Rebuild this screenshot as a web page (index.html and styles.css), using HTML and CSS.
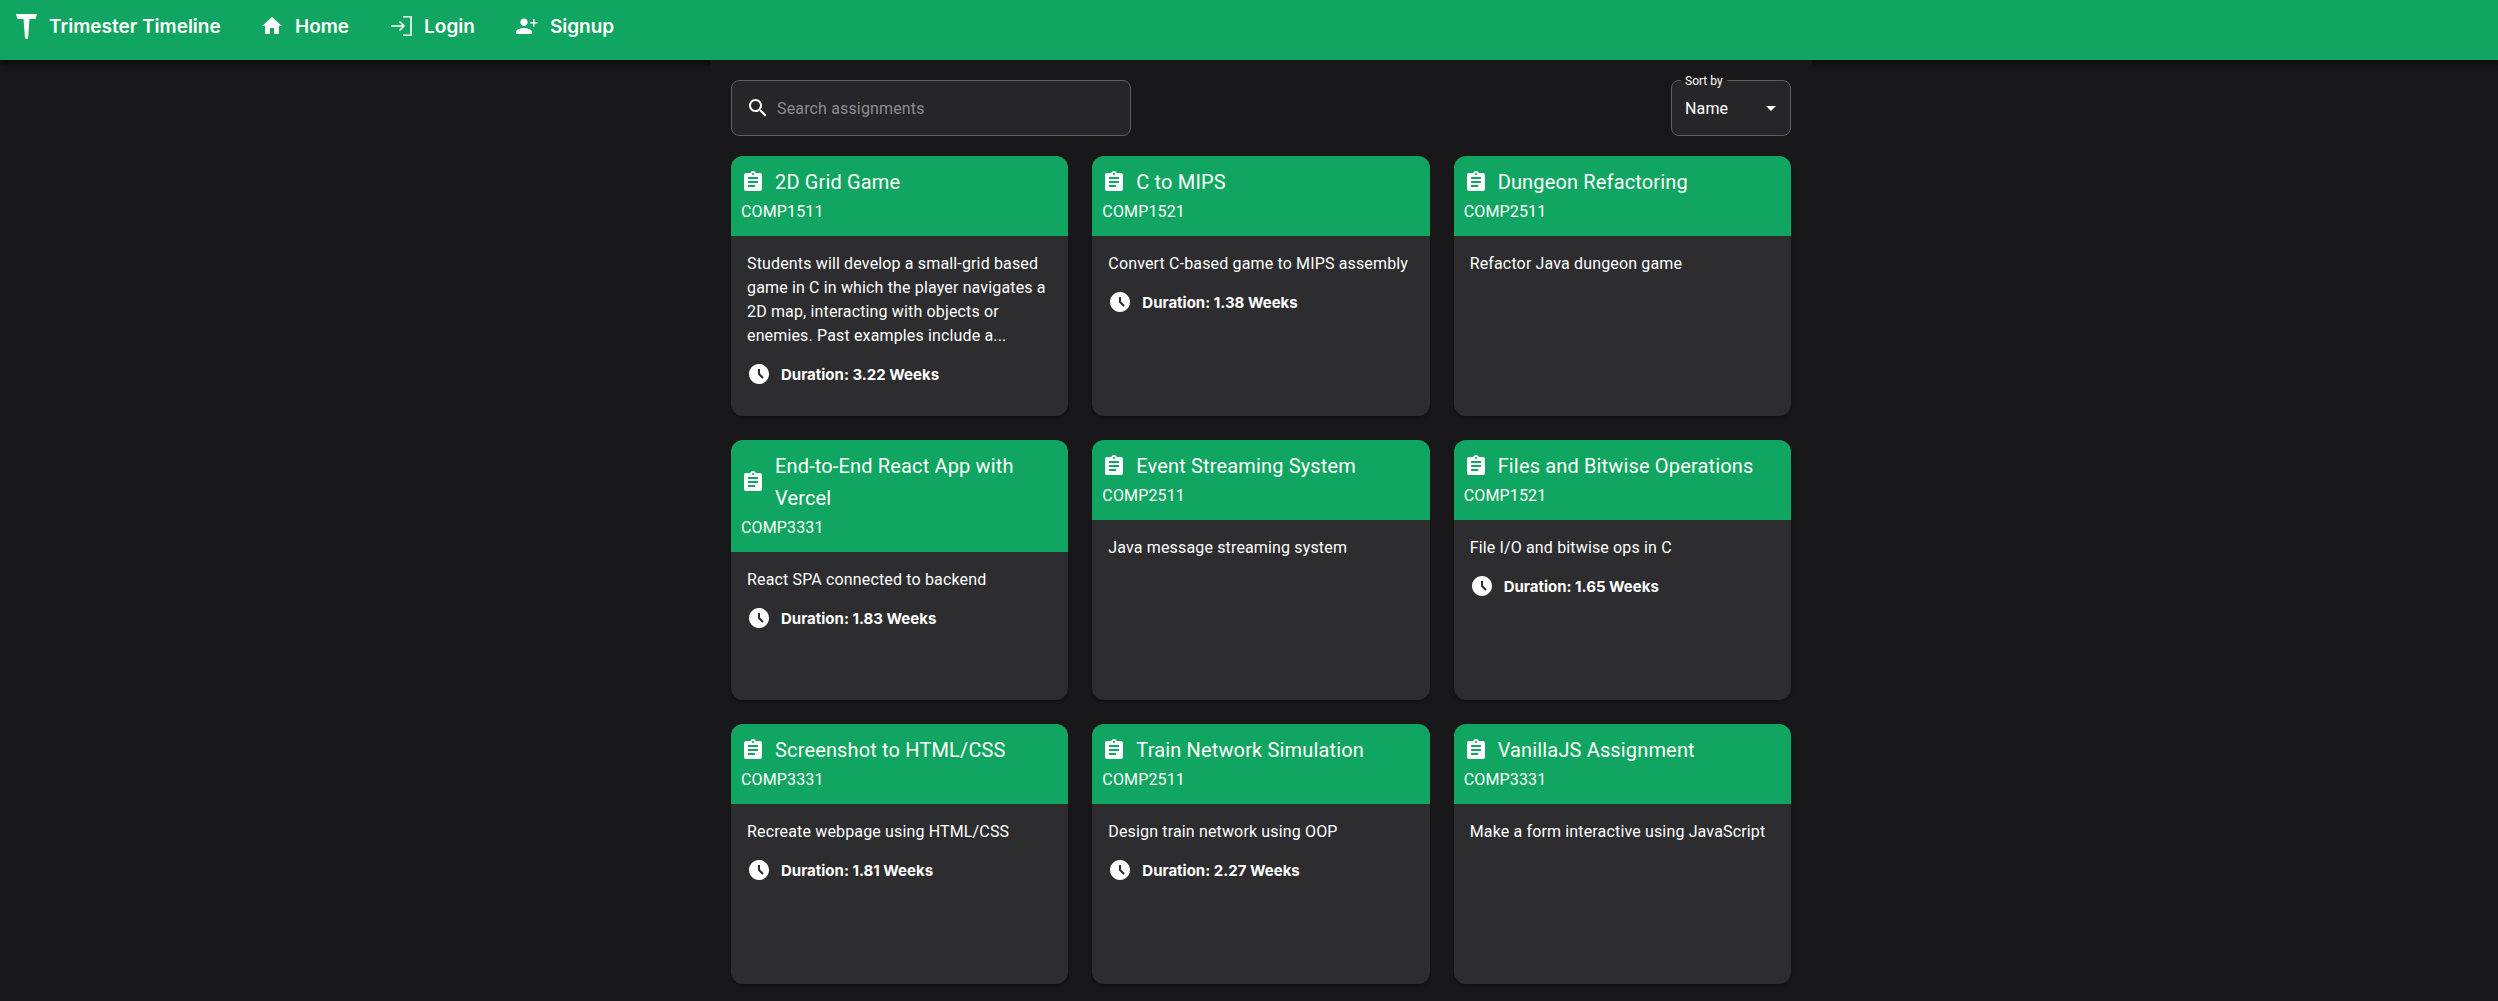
FILE: index.html
```html
<!DOCTYPE html>
<html lang="en">
<head>
<meta charset="utf-8">
<title>Trimester Timeline</title>
<link rel="stylesheet" href="styles.css">
</head>
<body>
<svg class="defs" width="0" height="0" aria-hidden="true">
  <symbol id="i-assign" viewBox="0 0 24 24"><path d="M19 3h-4.18C14.4 1.84 13.3 1 12 1c-1.3 0-2.4.84-2.82 2H5c-1.1 0-2 .9-2 2v14c0 1.1.9 2 2 2h14c1.1 0 2-.9 2-2V5c0-1.1-.9-2-2-2zm-7 0c.55 0 1 .45 1 1s-.45 1-1 1-1-.45-1-1 .45-1 1-1zm2 14H7v-2h7v2zm3-4H7v-2h10v2zm0-4H7V7h10v2z"/></symbol>
  <symbol id="i-clock" viewBox="0 0 24 24"><path d="M11.99 2C6.47 2 2 6.48 2 12s4.47 10 9.99 10C17.52 22 22 17.52 22 12S17.52 2 11.99 2zm3.3 14.71L11 12.41V7h2v4.59l3.71 3.71-1.42 1.41z"/></symbol>
</svg>
<header class="appbar">
  <div class="brand">
    <svg class="logo" viewBox="0 0 21 25"><path d="M0 0h21l-1.500 5h-6L12 25l-3-.500L7.500 5h-6z"/></svg>
    <span class="brand-name">Trimester Timeline</span>
  </div>
  <nav class="nav">
    <a class="nav-item"><svg class="ic" viewBox="0 0 24 24"><path d="M10 20v-6h4v6h5v-8h3L12 3 2 12h3v8z"/></svg><span>Home</span></a>
    <a class="nav-item"><svg class="ic stroke" viewBox="0 0 24 24"><path d="M2 12h13M10.500 7.500 15 12l-4.500 4.500M14 2.800h8v18.400h-8"/></svg><span>Login</span></a>
    <a class="nav-item"><svg class="ic" viewBox="0 0 24 24"><path d="M9 12c2 0 3.700-1.700 3.700-3.800S11 4.500 9 4.500 5.300 6.100 5.300 8.200 7 12 9 12zm0 2c-2.700 0-8 1.300-8 4v2h16v-2c0-2.700-5.300-4-8-4zM18 8V5h1.500v3h3v1.500h-3v3H18v-3h-3V8z"/></svg><span>Signup</span></a>
  </nav>
</header>
<div class="page">
  <main class="container">
    <div class="controls">
      <label class="search">
        <svg class="ic" viewBox="0 0 24 24"><path d="M15.500 14h-.79l-.28-.27C15.410 12.590 16 11.110 16 9.500 16 5.910 13.090 3 9.500 3S3 5.910 3 9.500 5.910 16 9.500 16c1.610 0 3.090-.59 4.230-1.570l.27.28v.79l5 4.990L20.490 19l-4.990-5zm-6 0C7.010 14 5 11.990 5 9.500S7.010 5 9.500 5 14 7.010 14 9.500 11.990 14 9.500 14z"/></svg>
        <span class="placeholder">Search assignments</span>
      </label>
      <div class="select">
        <span class="select-label">Sort by</span>
        <span class="select-value">Name</span>
        <svg class="ic" viewBox="0 0 24 24"><path d="M7 10l5 5 5-5z"/></svg>
      </div>
    </div>
    <section class="grid">
      <article class="card">
        <div class="card-head"><div class="card-title"><svg class="ic"><use href="#i-assign"/></svg><h2>2D Grid Game</h2></div><p class="code">COMP1511</p></div>
        <div class="card-body"><p class="desc">Students will develop a small-grid based game in C in which the player navigates a 2D map, interacting with objects or enemies. Past examples include a...</p><div class="duration"><svg class="ic"><use href="#i-clock"/></svg><span>Duration: 3.22 Weeks</span></div></div>
      </article>
      <article class="card">
        <div class="card-head"><div class="card-title"><svg class="ic"><use href="#i-assign"/></svg><h2>C to MIPS</h2></div><p class="code">COMP1521</p></div>
        <div class="card-body"><p class="desc">Convert C-based game to MIPS assembly</p><div class="duration"><svg class="ic"><use href="#i-clock"/></svg><span>Duration: 1.38 Weeks</span></div></div>
      </article>
      <article class="card">
        <div class="card-head"><div class="card-title"><svg class="ic"><use href="#i-assign"/></svg><h2>Dungeon Refactoring</h2></div><p class="code">COMP2511</p></div>
        <div class="card-body"><p class="desc">Refactor Java dungeon game</p></div>
      </article>
      <article class="card">
        <div class="card-head"><div class="card-title"><svg class="ic"><use href="#i-assign"/></svg><h2>End-to-End React App with Vercel</h2></div><p class="code">COMP3331</p></div>
        <div class="card-body"><p class="desc">React SPA connected to backend</p><div class="duration"><svg class="ic"><use href="#i-clock"/></svg><span>Duration: 1.83 Weeks</span></div></div>
      </article>
      <article class="card">
        <div class="card-head"><div class="card-title"><svg class="ic"><use href="#i-assign"/></svg><h2>Event Streaming System</h2></div><p class="code">COMP2511</p></div>
        <div class="card-body"><p class="desc">Java message streaming system</p></div>
      </article>
      <article class="card">
        <div class="card-head"><div class="card-title"><svg class="ic"><use href="#i-assign"/></svg><h2>Files and Bitwise Operations</h2></div><p class="code">COMP1521</p></div>
        <div class="card-body"><p class="desc">File I/O and bitwise ops in C</p><div class="duration"><svg class="ic"><use href="#i-clock"/></svg><span>Duration: 1.65 Weeks</span></div></div>
      </article>
      <article class="card">
        <div class="card-head"><div class="card-title"><svg class="ic"><use href="#i-assign"/></svg><h2>Screenshot to HTML/CSS</h2></div><p class="code">COMP3331</p></div>
        <div class="card-body"><p class="desc">Recreate webpage using HTML/CSS</p><div class="duration"><svg class="ic"><use href="#i-clock"/></svg><span>Duration: 1.81 Weeks</span></div></div>
      </article>
      <article class="card">
        <div class="card-head"><div class="card-title"><svg class="ic"><use href="#i-assign"/></svg><h2>Train Network Simulation</h2></div><p class="code">COMP2511</p></div>
        <div class="card-body"><p class="desc">Design train network using OOP</p><div class="duration"><svg class="ic"><use href="#i-clock"/></svg><span>Duration: 2.27 Weeks</span></div></div>
      </article>
      <article class="card">
        <div class="card-head"><div class="card-title"><svg class="ic"><use href="#i-assign"/></svg><h2>VanillaJS Assignment</h2></div><p class="code">COMP3331</p></div>
        <div class="card-body"><p class="desc">Make a form interactive using JavaScript</p></div>
      </article>
    </section>
  </main>
</div>
</body>
</html>
```

FILE: styles.css
```css
* { box-sizing: border-box; }
html, body { margin: 0; padding: 0; }
body {
  background: #18181a;
  color: #fff;
  font-family: Roboto, "Liberation Sans", sans-serif;
  height: 1001px;
  overflow: hidden;
}
.defs { display: block; height: 0; }
.ic { width: 24px; height: 24px; fill: #fff; flex: none; display: block; }
.ic.stroke { fill: none; stroke: #fff; stroke-width: 1.6; }

.appbar {
  height: 60px;
  padding: 0 0 8px 16px;
  background: #10a560;
  display: flex;
  align-items: center;
  box-shadow: 0 2px 4px -1px rgba(0,0,0,.4), 0 4px 5px 0 rgba(0,0,0,.3), 0 1px 10px 0 rgba(0,0,0,.25);
  font-family: Inter, "Open Sans", sans-serif;
  font-weight: 600;
  font-size: 19px;
}
.brand { display: flex; align-items: center; gap: 12px; width: 244px; }
.logo { width: 21px; height: 25px; fill: #fff; display: block; flex: none; }
.brand-name { white-space: nowrap; }
.nav { display: flex; align-items: center; gap: 40px; }
.nav-item { display: flex; align-items: center; gap: 11px; }

.page { padding-left: 24px; display: flex; justify-content: center; }
.container {
  width: 1102px;
  padding: 20px 21px 0;
  background: #18181a;
  position: relative;
}
.controls { display: flex; justify-content: space-between; margin-bottom: 20px; }
.search {
  width: 400px;
  height: 56px;
  padding: 0 14px;
  display: flex;
  align-items: center;
  gap: 7px;
  background: #262628;
  border: 1px solid #5f5f61;
  border-radius: 8px;
}
.placeholder { font-size: 16px; letter-spacing: .15px; color: #8c8c8d; }
.select {
  width: 120px;
  height: 56px;
  padding: 0 7px 0 13px;
  display: flex;
  align-items: center;
  justify-content: space-between;
  background: #262628;
  border: 1px solid #5f5f61;
  border-radius: 8px;
  position: relative;
}
.select-value { font-size: 16px; letter-spacing: .15px; }
.select-label {
  position: absolute;
  top: -8px;
  left: 9px;
  padding: 0 4px;
  font-size: 12px;
  line-height: 16px;
  background: linear-gradient(#18181a 50%, #262628 50%);
}

.grid {
  display: grid;
  grid-template-columns: repeat(3, 1fr);
  grid-auto-rows: 260px;
  gap: 24px;
}
.card {
  background: #2d2d2f;
  border-radius: 12px;
  overflow: hidden;
  box-shadow: 0 2px 3px rgba(0,0,0,.3);
}
.card-head { background: #10a560; padding: 10px 10px 13px; }
.card-title { display: flex; align-items: center; gap: 10px; }
.card-title h2 { margin: 0; font-size: 20px; font-weight: 400; line-height: 32px; letter-spacing: .15px; }
.code { margin: 3px 0 0; font-size: 16px; line-height: 22px; letter-spacing: .15px; }
.card-body { padding: 16px; }
.desc { margin: 0; font-size: 16px; line-height: 24px; letter-spacing: .15px; }
.duration {
  display: flex;
  align-items: center;
  gap: 10px;
  margin-top: 14px;
  font-family: Inter, "Open Sans", sans-serif;
  font-size: 15px;
  font-weight: 700;
}
```
